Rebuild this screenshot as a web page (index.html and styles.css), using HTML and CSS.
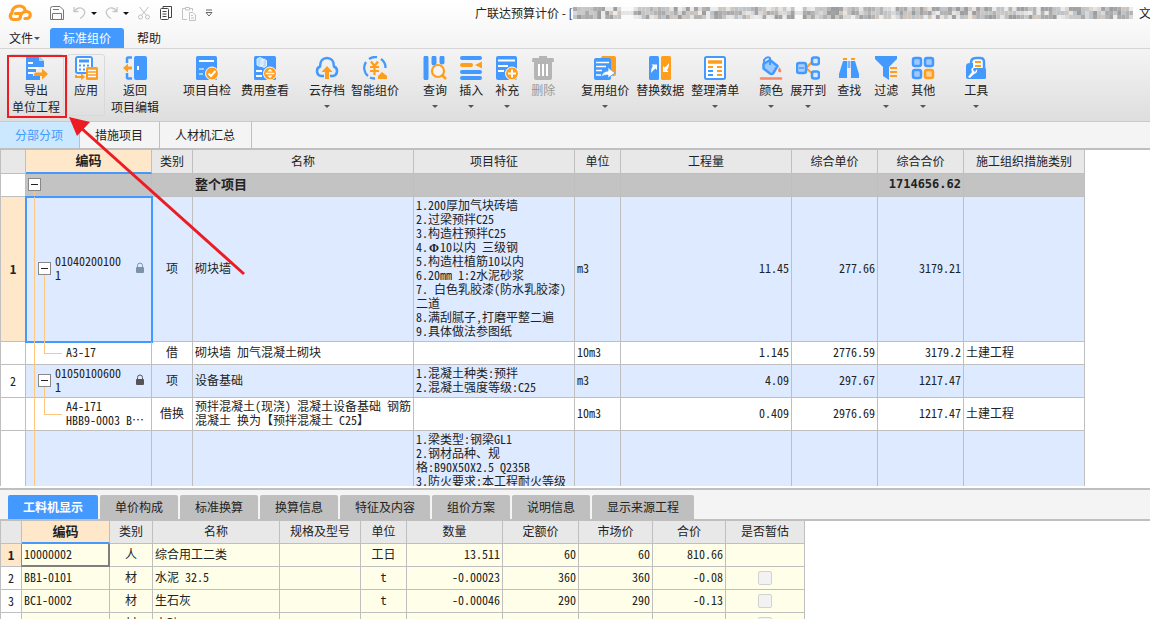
FILE: index.html
```html
<!DOCTYPE html>
<html lang="zh-CN">
<head>
<meta charset="utf-8">
<title>广联达预算计价</title>
<link rel="stylesheet" href="styles.css">
</head>
<body>
<header class="titlebar">
  <div class="quick">
    <svg class="logo" width="24" height="18" viewBox="0 0 24 18" fill="none" stroke="#ff9d1c" stroke-width="3.200" stroke-linecap="round" stroke-linejoin="round"><path d="M8 15.500H5.500A3.500 3.500 0 0 1 4 9C3.500 5 7.500 1.800 11.500 2C14.500 2.200 16.500 3.500 17 6"/><path d="M7.500 9.500H12.500V12.500Q12 15.500 9.500 15.500M12.500 11.500Q14.500 7.500 18.500 7.500C23.500 7.500 23.500 14.500 18.500 14.500H17"/></svg>
    <button class="qbtn" aria-label="保存"><svg width="16" height="16" viewBox="0 0 16 16" fill="none" stroke="#777"><path d="M1.500 3.500Q1.500 1.500 3.500 1.500H11L14.500 5V14.500H1.500ZM4 4.500H10M3.500 14.500V8.500H12.500V14.500"/></svg></button>
    <button class="qbtn drop" aria-label="撤销"><svg width="14" height="14" viewBox="0 0 14 14" fill="none" stroke="#c6c6c6" stroke-width="1.300"><path d="M1 1V5.500H5.500M1.500 5C4 1.500 8 1 10.500 3.500C13 6 11.500 10 7 12.500"/></svg><i class="caret dark"></i></button>
    <button class="qbtn drop" aria-label="重做"><svg width="14" height="14" viewBox="0 0 14 14" fill="none" stroke="#c6c6c6" stroke-width="1.300"><path d="M12 1V5.500H7.500M11.500 5C9 1.500 5 1 2.500 3.500C0 6 1.500 10 6 12.500"/></svg><i class="caret dark"></i></button>
    <button class="qbtn" aria-label="剪切"><svg width="14" height="14" viewBox="0 0 14 14" fill="none" stroke="#c2c2c2"><path d="M2.500 1L9.500 9.500M11.500 1L4.500 9.500"/><circle cx="3.500" cy="11" r="2"/><circle cx="10.500" cy="11" r="2"/></svg></button>
    <button class="qbtn" aria-label="复制"><svg width="14" height="16" viewBox="0 0 14 16" fill="none" stroke="#444"><rect x="1.500" y="3.500" width="8" height="11" rx="1"/><path d="M4 3.500V1.500H12.500V12.500H9.500M3.500 6.500H7.500M3.500 9H7.500M3.500 11.500H7.500"/></svg></button>
    <button class="qbtn" aria-label="粘贴"><svg width="16" height="16" viewBox="0 0 16 16" fill="none" stroke="#c2c2c2"><path d="M6 14.500H1.500V3.500H4M9 3.500H11.500V6M4.500 2.500H8.500V5H4.500ZM8.500 7.500H12L14.500 10V15.500H8.500ZM10 10.500H12M10 13H13"/></svg></button>
    <button class="qbtn" aria-label="自定义"><svg width="8" height="8" viewBox="0 0 8 8"><path d="M1 1H7" stroke="#666"/><path d="M1 3.500H7L4 7Z" fill="#fff" stroke="#666"/></svg></button>
  </div>
  <div class="wintitle"><span>广联达预算计价 - [</span><svg id="mask" class="mask" width="556" height="12" viewBox="0 0 556 12" preserveAspectRatio="none" aria-hidden="true"></svg><span class="tail">文</span></div>
</header>
<nav class="menu">
  <button class="menuitem">文件<i class="caret"></i></button>
  <button class="menuitem active">标准组价</button>
  <button class="menuitem">帮助</button>
</nav>
<div class="ribbon">
  <div class="group first">
    <button class="tool framed wide"><svg viewBox="0 0 24 24"><path d="M2 0H15L20 5V11H12V16H9V24H2Z" fill="#4499ff"/><path d="M9 20H16V24H9Z" fill="#4499ff"/><path d="M15 0V5H20Z" fill="#a8d0ff"/><path d="M4 7H9M4 12H14M4 17H9" stroke="#fff" stroke-width="2"/><path d="M11 16.500H18V12.500L24 18L18 23.500V20H10V18.500Z" fill="#ff9d1c"/></svg><span>导出<br>单位工程</span></button>
    <button class="tool framed tall"><svg viewBox="0 0 24 24"><rect x="2" y="1" width="16" height="16" rx="2" fill="#fff" stroke="#4499ff" stroke-width="2"/><path d="M5 5H15" stroke="#4499ff" stroke-width="3"/><path d="M5 9.500H7M9 9.500H11M13 9.500H15M5 13.500H7M9 13.500H11" stroke="#4499ff" stroke-width="2"/><rect x="12" y="11" width="12" height="13" rx="1.500" fill="#ff9d1c"/><path d="M14 14.500H22M14 17.500H22M14 20.500H22" stroke="#fff" stroke-width="1.300"/><path d="M2 19V21H8" stroke="#ff9d1c" stroke-width="2" fill="none"/><path d="M7 17L11 21L7 24Z" fill="#ff9d1c"/></svg><span>应用</span></button>
    <button class="tool"><svg viewBox="0 0 24 24"><rect x="11" y="0" width="13" height="24" rx="2" fill="#4499ff"/><rect x="14" y="10" width="2" height="4" fill="#fff"/><path d="M9 1.500H5Q4 1.500 4 3V7M4 17V21Q4 22.500 5 22.500H9" fill="none" stroke="#4499ff" stroke-width="2.500"/><path d="M0 12L5 7.500V10.500H9V13.500H5V16.500Z" fill="#ff9d1c"/></svg><span>返回<br>项目编辑</span></button>
  </div>
  <div class="group g2">
    <button class="tool"><svg viewBox="0 0 24 24"><rect x="1" y="0" width="21" height="24" rx="1.500" fill="#4499ff"/><path d="M4 5H19" stroke="#fff" stroke-width="2"/><path d="M4 13H9M4 18H8" stroke="#a8d0ff" stroke-width="2"/><circle cx="17" cy="17.500" r="6.500" fill="#ff9d1c" stroke="#fff"/><path d="M13.500 17.500L16 20L20.500 15" fill="none" stroke="#fff" stroke-width="2"/></svg><span>项目自检</span></button>
    <button class="tool"><svg viewBox="0 0 24 24"><rect x="1" y="0" width="22" height="24" rx="1.500" fill="#4499ff"/><path d="M4 3L7 1.500L10 3V9L7 10.500L4 9ZM8 4.500L11 3L13.500 4.500V10L11 11.500L8 10Z" fill="#b5d8ff" stroke="#fff" stroke-width=".8"/><path d="M3 15H9M3 20H9" stroke="#fff" stroke-width="2"/><circle cx="17" cy="17.500" r="6.500" fill="#ff9d1c" stroke="#fff"/><path d="M12.500 17.500H21.500" stroke="#fff" stroke-width="1.500"/><path d="M17 12.800L19.500 15.500H14.500ZM17 22.300L19.500 19.500H14.500Z" fill="#fff"/></svg><span>费用查看</span></button>
  </div>
  <div class="group g3">
    <button class="tool"><svg viewBox="0 0 24 24"><path d="M9 20H6A5 5 0 0 1 5 10.500C5 5 8 2 12 2C16 2 19 5 19 10.500A5 5 0 0 1 18 20H15" fill="none" stroke="#4499ff" stroke-width="2.500"/><path d="M12 10L17.500 16H14V23H10V16H6.500Z" fill="#ff9d1c"/></svg><span>云存档</span><i class="caret"></i></button>
    <button class="tool"><svg viewBox="0 0 24 24"><path d="M5 20A10.500 10.500 0 0 1 3 6M6 3A10.500 10.500 0 0 1 14 1.200M18 3A10.500 10.500 0 0 1 22.500 12M7 21.500A10 10 0 0 0 12 22.500" fill="none" stroke="#4499ff" stroke-width="2.300"/><path d="M8 5.500L11.500 10L15 5.500M7 11H16M7 15H16M11.500 10V19" fill="none" stroke="#ff9d1c" stroke-width="2.200"/><path d="M15 23V20L19 16L24 20V23Z" fill="#ff9d1c"/></svg><span>智能组价</span></button>
  </div>
  <div class="group g4">
    <button class="tool"><svg viewBox="0 0 24 24"><path d="M3 2V22" stroke="#4499ff" stroke-width="5" stroke-linecap="round"/><path d="M11 2V7M19 2V6" stroke="#4499ff" stroke-width="5" stroke-linecap="round"/><circle cx="15" cy="15" r="6" fill="#f4f4f4" stroke="#ff9d1c" stroke-width="2.200"/><path d="M19 19L23 23" stroke="#ff9d1c" stroke-width="2.500"/></svg><span>查询</span><i class="caret"></i></button>
    <button class="tool"><svg viewBox="0 0 24 24"><path d="M3 2H21M3 16H21M3 22H21" stroke="#4499ff" stroke-width="4" stroke-linecap="round"/><path d="M3 9H12" stroke="#ff9d1c" stroke-width="4" stroke-linecap="round"/><path d="M23 5.500V12.500L16 9Z" fill="#ff9d1c"/></svg><span>插入</span><i class="caret"></i></button>
    <button class="tool"><svg viewBox="0 0 24 24"><rect x="1" y="0" width="21" height="24" rx="2" fill="#4499ff"/><path d="M3 4.500H20M3 10H13M3 15H9" stroke="#fff" stroke-width="2"/><circle cx="17" cy="17.500" r="6.500" fill="#ff9d1c" stroke="#fff"/><path d="M13 17.500H21M17 13.500V21.500" stroke="#fff" stroke-width="2"/></svg><span>补充</span><i class="caret"></i></button>
    <button class="tool" disabled><svg viewBox="0 0 24 24"><path d="M8 0H16V2H22Q23 2 23 6H1Q1 2 2 2H8ZM3 6H21V22Q21 24 19 24H5Q3 24 3 22Z" fill="#b5b5b5"/><path d="M8 8V20M12 8V20M16 8V20" stroke="#fff" stroke-width="2"/></svg><span>删除</span></button>
  </div>
  <div class="group g5">
    <button class="tool"><svg viewBox="0 0 24 24"><rect x="8" y="0" width="15" height="20" rx="2" fill="#ff9d1c"/><rect x="1" y="2" width="17" height="22" rx="2" fill="#4499ff"/><path d="M3 6.500H16M3 10.500H13M3 14.500H9M3 19H8" stroke="#fff" stroke-width="1.700"/><path d="M8 21Q10 15 15 15V11.500L22 17L15 22V19Q11 18.500 8 21Z" fill="#fff" stroke="#4499ff" stroke-width=".7"/></svg><span>复用组价</span><i class="caret"></i></button>
    <button class="tool"><svg viewBox="0 0 24 24"><rect x="1" y="0" width="10" height="24" rx="1.500" fill="#4499ff"/><rect x="13" y="0" width="10" height="24" rx="1.500" fill="#ff9d1c"/><path d="M3 17Q3 12 5 10L3.500 8.500H9V14L7.500 12.500Q5 14 3 17ZM21 7Q21 12 19 14L20.500 16H15V10L16.500 11.500Q19 10 21 7Z" fill="#fff"/></svg><span>替换数据</span></button>
    <button class="tool"><svg viewBox="0 0 24 24"><rect x="2" y="1" width="20" height="22" rx="1.500" fill="#fff" stroke="#4499ff" stroke-width="2"/><path d="M5 6H19" stroke="#ff9d1c" stroke-width="3.500"/><path d="M5 11H10" stroke="#ff9d1c" stroke-width="2"/><path d="M14 11H19M14 15H19M14 19H19" stroke="#ff9d1c" stroke-width="2"/><path d="M5 15H10M5 19H10" stroke="#4499ff" stroke-width="2"/></svg><span>整理清单</span><i class="caret"></i></button>
  </div>
  <div class="group g6">
    <button class="tool"><svg viewBox="0 0 24 24"><path d="M11 4L18.500 10L14 17.500Q12.500 18.500 11 17.500L4.500 12.500V8Z" fill="#9ccaff" stroke="#4499ff" stroke-width="2.500" stroke-linejoin="round"/><path d="M5 8V4Q8 0 11 2V9" fill="none" stroke="#4499ff" stroke-width="2"/><path d="M20 11Q23 14 22 16Q20 17 19 15Z" fill="#f7876a"/><path d="M2 22.500H22" stroke="#f7876a" stroke-width="2.500" stroke-linecap="round"/></svg><span>颜色</span><i class="caret"></i></button>
    <button class="tool"><svg viewBox="0 0 24 24"><path d="M10 12L18 4M10 12L18 19" stroke="#ff9d1c" stroke-width="2"/><rect x="1" y="7" width="9" height="10" rx="2" fill="#a8d0ff" stroke="#4499ff" stroke-width="2.500"/><path d="M3 12H8" stroke="#4499ff" stroke-width="1.500"/><rect x="16" y="1.500" width="7" height="7" rx="2" fill="#d5e9ff" stroke="#4499ff" stroke-width="2.500"/><rect x="16" y="15.500" width="7" height="7" rx="2" fill="#d5e9ff" stroke="#4499ff" stroke-width="2.500"/></svg><span>展开到</span><i class="caret"></i></button>
  </div>
  <div class="group g7">
    <button class="tool"><svg viewBox="0 0 24 24"><path d="M6 3H10M14 3H18" stroke="#ff9d1c" stroke-width="2"/><path d="M6 5H10V22H2V18ZM14 5H18L22 18V22H14Z" fill="#4499ff"/><path d="M11.200 5V12M12.800 5V12" stroke="#4499ff" stroke-width="1"/></svg><span>查找</span></button>
    <button class="tool"><svg viewBox="0 0 24 24"><path d="M1 0H23V3L15 11V24L9 20V11L1 3Z" fill="#4499ff"/><path d="M16 12H23M16 16H23M16 20H23" stroke="#ff9d1c" stroke-width="2"/></svg><span>过滤</span><i class="caret"></i></button>
    <button class="tool"><svg viewBox="0 0 24 24" stroke-width="2.500"><g fill="#9ccaff" stroke="#4499ff"><rect x="2" y="2" width="8" height="8" rx="2"/><rect x="14" y="2" width="8" height="8" rx="2"/><rect x="2" y="14" width="8" height="8" rx="2"/></g><rect x="14" y="14" width="8" height="8" rx="2" fill="#ffcf94" stroke="#ff9d1c"/></svg><span>其他</span><i class="caret"></i></button>
  </div>
  <div class="group g8">
    <button class="tool"><svg viewBox="0 0 24 24"><path d="M7 7Q7 2 12 2H16Q20 2 20 6V14H8Z" fill="#fff" stroke="#4499ff" stroke-width="2.500"/><path d="M11 6H17M11 10H17" stroke="#ff9d1c" stroke-width="2"/><path d="M2 10Q2 7 6 7H9V12H21Q22 12 22 14V22Q22 23 20 23H4Q2 23 2 21Z" fill="#4499ff"/><path d="M4 21L8 16Q6 12 10 11L9 14L11 16L13 13Q14 17 10 18L6 22Z" fill="#fff"/></svg><span>工具</span><i class="caret"></i></button>
  </div>
</div>
<nav class="sheets">
  <button class="sheet active">分部分项</button>
  <button class="sheet">措施项目</button>
  <button class="sheet">人材机汇总</button>
</nav>
<main class="pane">
  <table class="grid">
    <colgroup><col class="w25"><col class="w126"><col class="w41"><col class="w221"><col class="w161"><col class="w46"><col class="w171"><col class="w86"><col class="w86"><col class="w121"></colgroup>
    <thead><tr><th></th><th class="key">编码</th><th>类别</th><th>名称</th><th>项目特征</th><th>单位</th><th>工程量</th><th>综合单价</th><th>综合合价</th><th>施工组织措施类别</th></tr></thead>
    <tbody>
      <tr class="total"><td class="no"></td><td class="tree root"><button class="fold" aria-label="折叠"></button></td><td></td><td>整个项目</td><td></td><td></td><td></td><td></td><td class="num sum">1714656.62</td><td></td></tr>
      <tr class="item"><td class="no current">1</td><td class="tree parent selected"><div class="code"><button class="fold" aria-label="折叠"></button><span>010402001001</span><svg class="lock" width="10" height="12" viewBox="0 0 10 12"><path d="M2.500 6V3.500A2.500 2.500 0 0 1 7.500 3.500V6" fill="none" stroke="#7b93a8"/><rect x="1" y="5" width="8" height="6" rx="1" fill="#7b93a8"/></svg></div></td><td class="mid">项</td><td>砌块墙</td><td>1.200厚加气块砖墙<br>2.过梁预拌C25<br>3.构造柱预拌C25<br>4.<span class="phi">Φ</span>10以内 三级钢<br>5.构造柱植筋10以内<br>6.20mm 1:2水泥砂浆<br>7. 白色乳胶漆(防水乳胶漆)<br>二道<br>8.满刮腻子,打磨平整二遍<br>9.具体做法参图纸</td><td>m3</td><td class="num">11.45</td><td class="num">277.66</td><td class="num">3179.21</td><td></td></tr>
      <tr><td class="no"></td><td class="tree leaf">A3-17</td><td class="mid">借</td><td>砌块墙 加气混凝土砌块</td><td></td><td>10m3</td><td class="num">1.145</td><td class="num">2776.59</td><td class="num">3179.2</td><td>土建工程</td></tr>
      <tr class="item"><td class="no">2</td><td class="tree parent"><div class="code"><button class="fold" aria-label="折叠"></button><span>010501006001</span><svg class="lock" width="10" height="12" viewBox="0 0 10 12"><path d="M2.500 6V3.500A2.500 2.500 0 0 1 7.500 3.500V6" fill="none" stroke="#555"/><rect x="1" y="5" width="8" height="6" rx="1" fill="#555"/></svg></div></td><td class="mid">项</td><td>设备基础</td><td>1.混凝土种类:预拌<br>2.混凝土强度等级:C25</td><td>m3</td><td class="num">4.09</td><td class="num">297.67</td><td class="num">1217.47</td><td></td></tr>
      <tr><td class="no"></td><td class="tree leaf">A4-171<br>HBB9-0003 B⋯</td><td class="mid">借换</td><td>预拌混凝土(现浇) 混凝土设备基础 钢筋<br>混凝土 换为【预拌混凝土 C25】</td><td></td><td>10m3</td><td class="num">0.409</td><td class="num">2976.69</td><td class="num">1217.47</td><td>土建工程</td></tr>
      <tr class="item"><td class="no"></td><td class="tree"></td><td></td><td></td><td>1.梁类型:钢梁GL1<br>2.钢材品种、规<br>格:B90X50X2.5 Q235B<br>3.防火要求:本工程耐火等级</td><td></td><td></td><td></td><td></td><td></td></tr>
    </tbody>
  </table>
</main>
<section class="detail">
  <nav class="tabs">
    <button class="tab active">工料机显示</button><button class="tab">单价构成</button><button class="tab">标准换算</button><button class="tab">换算信息</button><button class="tab">特征及内容</button><button class="tab">组价方案</button><button class="tab">说明信息</button><button class="tab">显示来源工程</button>
  </nav>
  <div class="lower">
  <table class="grid cream">
    <colgroup><col class="w21"><col class="w88"><col class="w43"><col class="w127"><col class="w81"><col class="w46"><col class="w96"><col class="w76"><col class="w74"><col class="w73"><col class="w79"></colgroup>
    <thead><tr><th></th><th class="key">编码</th><th>类别</th><th>名称</th><th>规格及型号</th><th>单位</th><th>数量</th><th>定额价</th><th>市场价</th><th>合价</th><th>是否暂估</th></tr></thead>
    <tbody>
      <tr><td class="no current">1</td><td class="cell-focus">10000002</td><td class="mid">人</td><td>综合用工二类</td><td></td><td class="mid">工日</td><td class="num">13.511</td><td class="num">60</td><td class="num">60</td><td class="num">810.66</td><td></td></tr>
      <tr><td class="no">2</td><td>BB1-0101</td><td class="mid">材</td><td>水泥 32.5</td><td></td><td class="mid">t</td><td class="num">-0.00023</td><td class="num">360</td><td class="num">360</td><td class="num">-0.08</td><td class="check"><input type="checkbox" aria-label="是否暂估" disabled></td></tr>
      <tr><td class="no">3</td><td>BC1-0002</td><td class="mid">材</td><td>生石灰</td><td></td><td class="mid">t</td><td class="num">-0.00046</td><td class="num">290</td><td class="num">290</td><td class="num">-0.13</td><td class="check"><input type="checkbox" aria-label="是否暂估" disabled></td></tr>
      <tr><td class="no"></td><td></td><td class="mid">材</td><td>中砂</td><td></td><td></td><td></td><td></td><td></td><td></td><td class="check"><input type="checkbox" aria-label="是否暂估" disabled></td></tr>
    </tbody>
  </table>
  </div>
</section>
<svg class="callout" width="250" height="280" viewBox="0 0 250 280" aria-hidden="true"><rect x="8" y="56" width="58" height="61" fill="none" stroke="#ec1c24" stroke-width="2"/><path d="M80 127L244 274" stroke="#ec1c24" stroke-width="3"/><path d="M69 117L90 122L77 136Z" fill="#ec1c24"/></svg>
<script src="mask.js"></script>
</body>
</html>
```
FILE: styles.css
```css
* { box-sizing: border-box; }
body {
  margin: 0;
  height: 100vh;
  display: flex;
  flex-direction: column;
  overflow: hidden;
  background: #fff;
  color: #222;
  font: 12px/16px "Noto Sans CJK SC", sans-serif;
}
button {
  margin: 0;
  padding: 0;
  border: 0;
  background: none;
  color: inherit;
  font: inherit;
}
.caret {
  display: block;
  width: 0;
  border: 3px solid transparent;
  border-top: 3px solid #555;
  border-bottom: 0;
}
.caret.dark { border-top-color: #111; }

/* Title bar and menu */
.titlebar {
  flex: none;
  display: flex;
  align-items: center;
  height: 26px;
  padding-left: 8px;
  background: linear-gradient(#fff, #f9f9f9);
}
.quick {
  display: flex;
  align-items: center;
  width: 467px;
  flex: none;
  gap: 8px;
}
.logo { margin-right: 9px; }
.qbtn { display: flex; align-items: center; }
.qbtn.drop { gap: 4px; }
.wintitle {
  flex: 1;
  display: flex;
  align-items: center;
  white-space: nowrap;
  height: 28px;
}
.mask { flex: 1; min-width: 0; margin-right: 6px; }
.tail { flex: none; width: 11px; overflow: hidden; }
.menu {
  flex: none;
  display: flex;
  align-items: flex-end;
  height: 22px;
  background: linear-gradient(#f9f9f9, #f3f3f3);
}
.menuitem {
  display: flex;
  align-items: center;
  gap: 1px;
  height: 20px;
  padding: 0 13px;
}
.menuitem:first-child { padding: 0 10px 0 9px; }
.menuitem.active {
  background: #4499ff;
  color: #fff;
  border-radius: 3px 3px 0 0;
}

/* Ribbon */
.ribbon {
  flex: none;
  display: flex;
  align-items: flex-start;
  height: 74px;
  padding: 5px 8px;
  border-top: 1px solid #d5d5d5;
  border-bottom: 1px solid #cacaca;
  background: linear-gradient(#f4f4f4, #dedede);
}
.group { display: flex; align-items: flex-start; }
.first { gap: 3px; }
.g2 { gap: 4px; margin-left: 18px; }
.g3 { margin-left: 14px; }
.g4 { gap: 6px; margin-left: 18px; }
.g5 { gap: 1px; margin-left: 20px; }
.g6 { gap: 1px; margin-left: 14px; }
.g7 { gap: 7px; margin-left: 5px; }
.g8 { margin-left: 23px; }
.tool {
  display: flex;
  flex-direction: column;
  align-items: center;
  padding: 2px 3px 0;
  line-height: 17px;
  white-space: nowrap;
}
.tool svg { width: 24px; height: 24px; margin-bottom: 1px; }
.tool .caret { margin-top: 7px; }
.tool:disabled { color: #999; }
.framed {
  height: 62px;
  border: 1px solid #d9d9d9;
  border-radius: 3px;
}
.framed.wide { padding: 1px 3px 0; }
.framed.tall { padding: 1px 6px 0; }

/* Sheet tabs */
.sheets {
  flex: none;
  display: flex;
  height: 28px;
  background: #f4f4f4;
  border-bottom: 2px solid #bfbfbf;
}
.sheet {
  padding: 0 16px 0 15px;
  border-right: 1px solid #bfbfbf;
}
.sheet.active { background: #cce8ff; color: #4499ff; }

/* Grids */
.pane { flex: 1 1 0; min-height: 0; overflow: hidden; margin-bottom: 2px; }
.grid {
  table-layout: fixed;
  width: 0;
  border-collapse: separate;
  border-spacing: 0;
  border-left: 1px solid #bfbfbf;
  line-height: 14px;
  font-feature-settings: "hwid" 1;
}
.w21 { width: 21px; } .w25 { width: 25px; } .w41 { width: 41px; } .w43 { width: 43px; }
.w46 { width: 46px; } .w73 { width: 73px; } .w74 { width: 74px; } .w76 { width: 76px; }
.w79 { width: 79px; } .w81 { width: 81px; } .w86 { width: 86px; } .w88 { width: 88px; }
.w96 { width: 96px; } .w121 { width: 121px; } .w126 { width: 126px; } .w127 { width: 127px; }
.w161 { width: 161px; } .w171 { width: 171px; } .w221 { width: 221px; }
.grid th, .grid td {
  height: 23px;
  padding: 1px 2px 3px;
  border-right: 1px solid #bfbfbf;
  border-bottom: 1px solid #bfbfbf;
  white-space: nowrap;
}
.grid th { background: #e8e8e8; font-weight: 400; }
.pane th { height: 24px; }
.grid th.key {
  background: #ffe7c9;
  border-bottom: 2px solid #4499ff;
  font-size: 13px;
  font-weight: 700;
}
.grid td { text-align: left; }
.grid td.mid, .grid td.no { text-align: center; }
.grid td.num { text-align: right; }
.item td { background: #deeaff; }
.total td { background: #c3c3c3; font-size: 13px; font-weight: 700; }
.total td.sum { font: 700 12px/14px "DejaVu Sans Mono", monospace; }
.grid td.no { background: #fff; padding: 2px; }
.grid td.current {
  background: #ffe7c9;
  font-weight: 700;
  font-feature-settings: normal;
}
.phi {
  display: inline-block;
  width: 12px;
  text-align: center;
  font: 700 12px/12px "Liberation Serif", serif;
}

/* Code tree: connector lines are painted in the cell behind its content */
.grid td.tree { position: relative; }
.tree::before {
  content: "";
  position: absolute;
  left: 8px;
  top: 0;
  bottom: -1px;
  border-left: 1px solid #ffc77d;
}
.root::before { top: 50%; }
.parent::after {
  content: "";
  position: absolute;
  left: 18px;
  top: 50%;
  bottom: -1px;
  border-left: 1px solid #ffc77d;
}
.leaf::after {
  content: "";
  position: absolute;
  left: 18px;
  top: 0;
  width: 17px;
  height: 50%;
  border: solid #ffc77d;
  border-width: 0 0 1px 1px;
}
.grid td.leaf { padding-left: 40px; }
.selected { outline: 2px solid #4499ff; outline-offset: -1px; }
.fold {
  position: relative;
  z-index: 1;
  display: block;
  flex: none;
  width: 13px;
  height: 13px;
  border: 1px solid #888;
  background: linear-gradient(#222, #222) center / 7px 1px no-repeat #fff;
}
.code { display: flex; align-items: center; gap: 4px; padding-left: 10px; }
.code span { flex: 1; white-space: normal; word-break: break-all; }
.lock { flex: none; margin: 0 4px 0 8px; }

/* Detail panel */
.detail {
  flex: 0 0 131px;
  display: flex;
  flex-direction: column;
  overflow: hidden;
  border-top: 2px solid #bfbfbf;
}
.tabs {
  flex: none;
  display: flex;
  gap: 2px;
  padding: 5px 8px 0;
  background: #f4f4f4;
  border-bottom: 2px solid #bfbfbf;
}
.tab {
  height: 24px;
  padding: 0 15px;
  background: #bfbfbf;
  border-radius: 2px 2px 0 0;
}
.tab.active { background: #4499ff; color: #fff; font-weight: 700; }
.lower { flex: 1; min-height: 0; overflow: hidden; }
.cream td { background: #ffffe9; }
.grid td.cell-focus {
  padding: 1px 1px 2px 2px;
  border-right: 2px solid #7f7f7f;
  border-bottom: 2px solid #7f7f7f;
  box-shadow: -1px 0 #4499ff;
}
.grid td.check { padding: 2px; }
input[type="checkbox"] {
  appearance: none;
  display: block;
  width: 14px;
  height: 14px;
  margin: 0 auto;
  border: 1px solid #d2d2d2;
  border-radius: 2px;
  background: #f2f2f2;
}

/* Annotation over the window */
.callout { position: absolute; left: 0; top: 0; pointer-events: none; }
```
FILE: mask.js
```js
// Paints the mosaic that hides the project path in the window title.
const mask = document.getElementById("mask");
const tints = ["#c4c4c4", "#b4b4b4", "#d8d8d8", "#9c9d9f", "#e6e3e0", "#bcc4cb", "#cfc6bd", "#ababab", "#ebebeb", "#c9c9c9", "#a3a3a6"];
const cell = 4;
let seed = 11;
for (let x = 0; x < 556; x += cell) {
  const gap = (x > 46 && x < 60) || (x > 216 && x < 226);
  for (let y = 0; y < 12; y += cell) {
    seed = (seed * 16807) % 2147483647;
    const block = document.createElementNS("http://www.w3.org/2000/svg", "rect");
    block.setAttribute("x", x);
    block.setAttribute("y", y);
    block.setAttribute("width", cell);
    block.setAttribute("height", cell);
    block.setAttribute("fill", gap ? (y === 4 ? "#e4e4e4" : "#fafafa") : tints[(seed >> 8) % tints.length]);
    mask.appendChild(block);
  }
}
```
